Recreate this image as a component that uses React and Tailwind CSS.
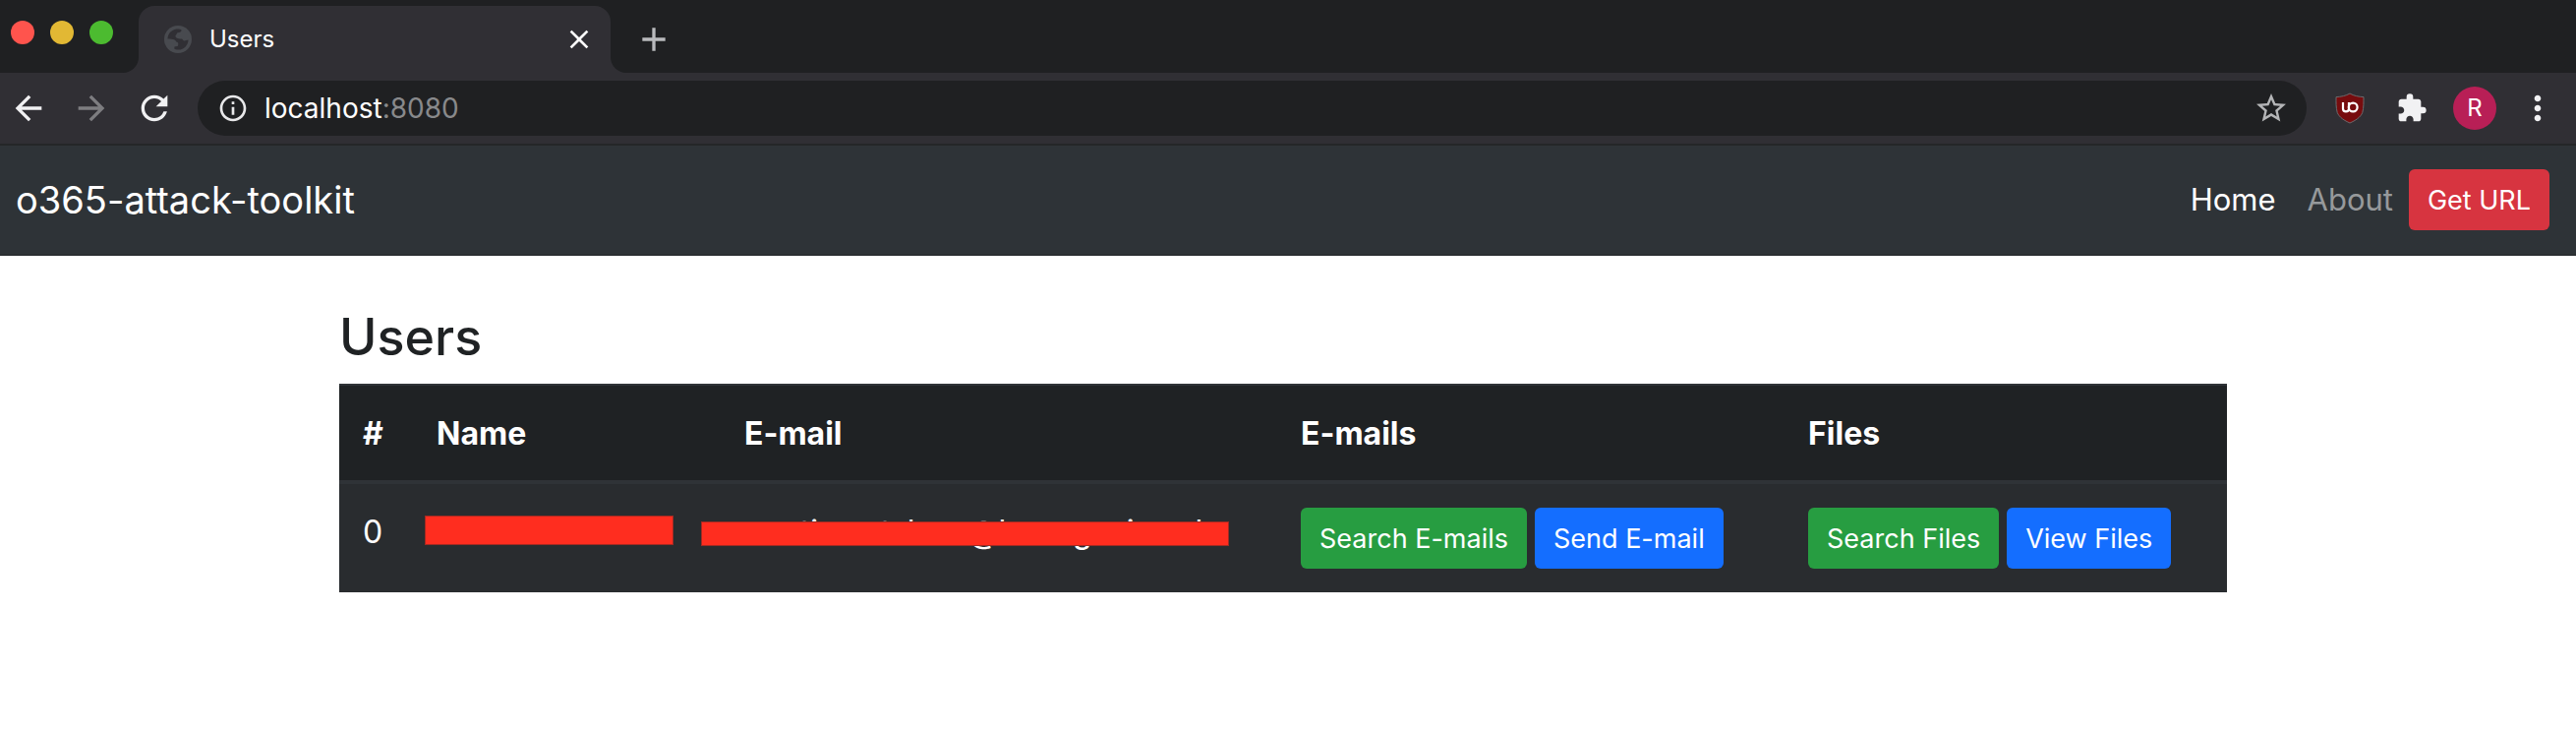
import React from "react";
import {
  MdAdd,
  MdArrowBack,
  MdArrowForward,
  MdClose,
  MdExtension,
  MdInfoOutline,
  MdMoreVert,
  MdRefresh,
  MdStarBorder,
} from "react-icons/md";

function GlobeIcon() {
  return (
    <svg viewBox="0 0 28 28" className="size-7" aria-hidden="true">
      <circle cx="14" cy="14" r="14" fill="#484a4f" />
      <path
        d="M3.5 13.6C3.6 8.4 7.4 4.2 12.4 3.5C14.5 3.2 16.4 3.8 17.6 4.4C17.6 6.2 16 7 13.6 7.2C12.6 7.4 12.8 9.6 11.4 10.2C11.6 12.6 13.2 13.4 17.6 13.6C19 13.8 19 15.4 20.4 15.6L24.5 14.4C24.6 19.4 20.4 24.4 14.4 24.6C12.4 24.6 11 24.2 10.4 23.8L10.4 21.6C11.8 20.8 14.2 21.6 14.2 19.4C14.6 17.4 13.6 16.8 12.2 16.6C11.6 14.4 10 13.8 3.5 13.6Z"
        fill="#302f34"
      />
    </svg>
  );
}

function ShieldIcon() {
  return (
    <svg viewBox="0 0 30 32" className="h-8 w-[30px]" aria-hidden="true">
      <path
        d="M15 1C11 3.4 6 4.4 1 4.6C1 10 0.8 15 2.2 20.4C4.2 25.4 9.6 28.6 15 31C20.4 28.6 25.8 25.4 27.8 20.4C29.2 15 29 10 29 4.6C24 4.4 19 3.4 15 1Z"
        fill="#770c0e"
        stroke="#6b6a6d"
        strokeWidth="1"
      />
      <path
        d="M8 10V16.5C8 18.6 9.2 19.4 11 19.4C12.8 19.4 14 18.6 14 16.5V10"
        fill="none"
        stroke="#fff"
        strokeWidth="2.2"
      />
      <circle cx="18.2" cy="15" r="4.4" fill="none" stroke="#fff" strokeWidth="2.2" />
    </svg>
  );
}

function TabStrip() {
  return (
    <div className="flex h-[74px] bg-[#1f2022]">
      <div className="flex w-[125px] shrink-0 gap-4 pt-[21px] pl-[11px]">
        <button aria-label="Close window" className="size-6 rounded-full bg-[#ff544d]" />
        <button aria-label="Minimize window" className="size-6 rounded-full bg-[#e2b834]" />
        <button aria-label="Zoom window" className="size-6 rounded-full bg-[#4cbb30]" />
      </div>
      <div className="flex items-end">
        <div className="size-4 bg-[#302f34]">
          <div className="size-4 rounded-br-2xl bg-[#1f2022]" />
        </div>
        <div className="flex h-[68px] w-[480px] items-center rounded-t-2xl bg-[#302f34] pr-4 pl-[26px]">
          <GlobeIcon />
          <span className="ml-[18px] flex-1 text-2xl text-white">Users</span>
          <button aria-label="Close tab" className="text-white">
            <MdClose className="size-8" />
          </button>
        </div>
        <div className="size-4 bg-[#302f34]">
          <div className="size-4 rounded-bl-2xl bg-[#1f2022]" />
        </div>
      </div>
      <button aria-label="New tab" className="ml-2 pt-[6px] text-[#b9babd]">
        <MdAdd className="size-10" />
      </button>
    </div>
  );
}

function Toolbar() {
  return (
    <div className="flex h-[74px] items-center border-b-2 border-[#242628] bg-[#302f34] pr-[19px] pl-[9px] text-[#f1f1f3]">
      <div className="flex w-48 shrink-0 gap-6">
        <button aria-label="Back">
          <MdArrowBack className="size-10" />
        </button>
        <button aria-label="Forward" className="text-[#7d7d80]">
          <MdArrowForward className="size-10" />
        </button>
        <button aria-label="Reload">
          <MdRefresh className="size-10" />
        </button>
      </div>
      <div className="flex h-14 flex-1 items-center rounded-full bg-[#1f2022] pr-[18px] pl-5">
        <MdInfoOutline className="size-8 text-[#e8e8ea]" />
        <a href="http://localhost:8080" className="ml-4 flex-1 text-[28px] leading-9 text-white">
          localhost<span className="text-[#88898b]">:8080</span>
        </a>
        <button aria-label="Bookmark this page" className="text-[#b4b5b7]">
          <MdStarBorder className="size-9" />
        </button>
      </div>
      <div className="ml-[29px] flex items-center">
        <button aria-label="uBlock Origin">
          <ShieldIcon />
        </button>
        <button aria-label="Extensions" className="ml-8">
          <MdExtension className="size-8" />
        </button>
        <button
          aria-label="Profile R"
          className="ml-[26px] flex size-11 items-center justify-center rounded-full bg-[#b81f56] text-2xl text-white"
        >
          R
        </button>
        <button aria-label="Menu" className="ml-[22px]">
          <MdMoreVert className="size-10" />
        </button>
      </div>
    </div>
  );
}

function Button({ className, children }) {
  return (
    <button
      className={`rounded-md px-[19px] pt-[11px] pb-[9px] text-[27px] leading-[42px] whitespace-nowrap text-white ${className}`}
    >
      {children}
    </button>
  );
}

function Navbar() {
  return (
    <nav className="flex h-28 items-center border-b-2 border-[#2b2f32] bg-[#2e3337] pr-[27px] pl-4">
      <a href="#" className="flex-1 text-[38px] leading-[60px] text-white">
        o365-attack-toolkit
      </a>
      <a href="#" className="px-4 text-[31px] leading-[48px] text-white">
        Home
      </a>
      <a href="#" className="px-4 text-[31px] leading-[48px] text-[#96999b]">
        About
      </a>
      <Button className="bg-[#d73440]">Get URL</Button>
    </nav>
  );
}

function HeaderCell({ children }) {
  return <th className="px-6 pt-[25px] pb-[23px] font-bold">{children}</th>;
}

function UsersTable() {
  return (
    <table className="w-full table-fixed border-t-2 border-[#2f3337] bg-[#292c2f] text-left text-[32px] leading-[48px] text-white">
      <colgroup>
        <col className="w-[75px]" />
        <col className="w-[313px]" />
        <col className="w-[566px]" />
        <col className="w-[516px]" />
        <col />
      </colgroup>
      <thead className="border-b-4 border-[#2f3337] bg-[#1f2224]">
        <tr>
          <HeaderCell>#</HeaderCell>
          <HeaderCell>Name</HeaderCell>
          <HeaderCell>E-mail</HeaderCell>
          <HeaderCell>E-mails</HeaderCell>
          <HeaderCell>Files</HeaderCell>
        </tr>
      </thead>
      <tbody>
        <tr className="align-top">
          <td className="px-6 pt-[25px]">0</td>
          <td className="px-3 py-8">
            <div className="h-[30px] w-[253px] border border-[#a02a22] bg-[#ff2d1f]" />
          </td>
          <td className="px-6 pt-[25px]">
            <div className="relative">
              nnntimnstslaaa@hnnngscimssl
              <div className="absolute top-[13px] -left-11 h-[25px] w-[537px] border border-[#a02a22] bg-[#ff2d1f]" />
            </div>
          </td>
          <td className="p-6">
            <div className="flex gap-2">
              <Button className="bg-[#279d41]">Search E-mails</Button>
              <Button className="bg-[#146eff]">Send E-mail</Button>
            </div>
          </td>
          <td className="p-6">
            <div className="flex gap-2">
              <Button className="bg-[#279d41]">Search Files</Button>
              <Button className="bg-[#146eff]">View Files</Button>
            </div>
          </td>
        </tr>
      </tbody>
    </table>
  );
}

export default function App() {
  return (
    <div className="min-h-screen bg-white font-['Inter','Liberation_Sans',sans-serif]">
      <header>
        <TabStrip />
        <Toolbar />
      </header>
      <Navbar />
      <main className="pt-[50px] pr-[10px]">
        <div className="mx-auto max-w-[1920px]">
          <h3 className="mb-[14px] text-[52px] leading-[66px] font-medium text-[#1f2224]">Users</h3>
          <UsersTable />
        </div>
      </main>
    </div>
  );
}
